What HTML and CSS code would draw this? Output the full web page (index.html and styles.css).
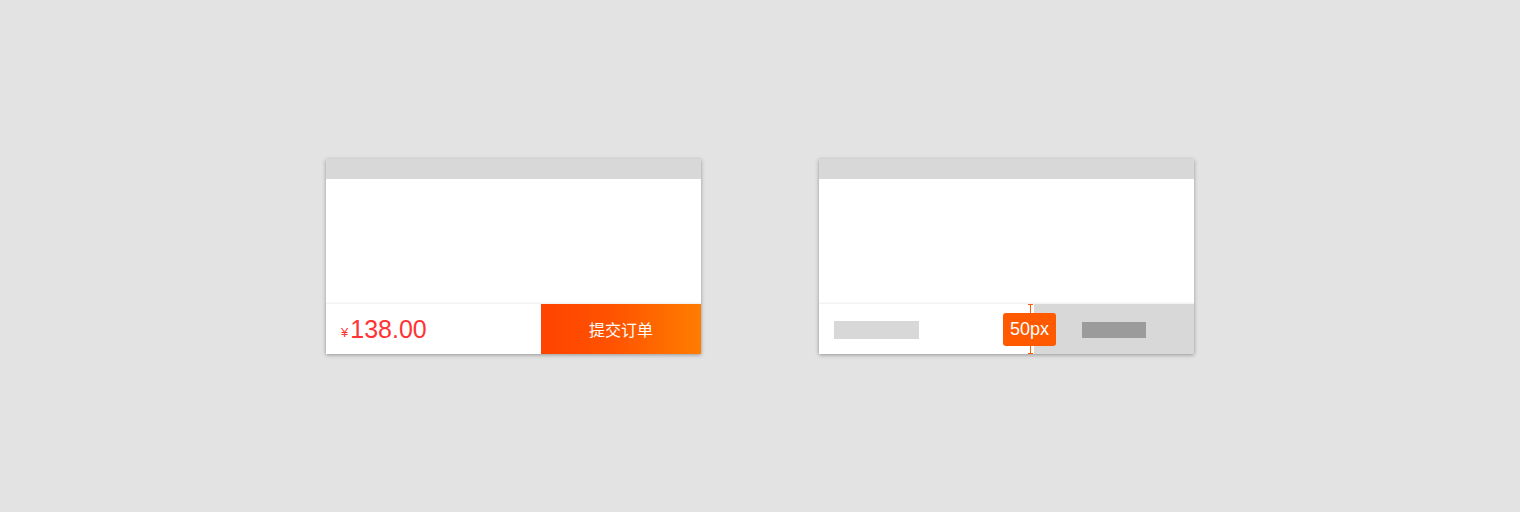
FILE: index.html
```html
<!DOCTYPE html>
<html lang="zh-CN">
<head>
<meta charset="utf-8">
<title>提交订单</title>
<link rel="stylesheet" href="styles.css">
</head>
<body>
<div class="stage">
  <div class="phone">
    <div class="status"></div>
    <div class="content"></div>
    <div class="footer">
      <div class="price"><span class="yen">¥</span><span class="amount">138.00</span></div>
      <div class="submit">提交订单</div>
    </div>
  </div>
  <div class="phone">
    <div class="status"></div>
    <div class="content"></div>
    <div class="footer">
      <div class="price"><span class="ph-light"></span></div>
      <div class="submit gray"><span class="ph-dark"></span></div>
      <div class="measure">
        <span class="mline"></span>
        <span class="badge">50px</span>
      </div>
    </div>
  </div>
</div>
</body>
</html>
```

FILE: styles.css
```css
html, body {
  margin: 0;
  padding: 0;
}
body {
  background: #e3e3e3;
  font-family: "Liberation Sans", "Noto Sans CJK SC", sans-serif;
}
.stage {
  width: 1520px;
  height: 512px;
  display: flex;
  align-items: center;
  justify-content: center;
  gap: 118px;
  padding-top: 1px;
  box-sizing: border-box;
}
.phone {
  width: 375px;
  height: 195px;
  background: #fff;
  display: flex;
  flex-direction: column;
  box-shadow: 0 1px 4px rgba(0, 0, 0, 0.35);
}
.status {
  height: 20px;
  background: #d8d8d8;
}
.content {
  flex: 1;
}
.footer {
  height: 50px;
  display: flex;
  position: relative;
  box-shadow: 0 -1px 2px rgba(0, 0, 0, 0.08);
}
.price {
  flex: 1;
  display: flex;
  align-items: center;
  padding-left: 15px;
  color: #ff3333;
}
.yen {
  font-size: 13px;
  margin-top: 7px;
  margin-right: 2px;
}
.amount {
  font-size: 25px;
  font-family: "Liberation Sans", sans-serif;
}
.submit {
  width: 160px;
  display: flex;
  align-items: center;
  justify-content: center;
  color: #fff;
  font-family: "Noto Sans CJK SC", sans-serif;
  font-size: 16px;
  background: linear-gradient(to right, #ff4300 0%, #ff5300 45%, #ff7d00 100%);
}
.submit.gray {
  background: #d8d8d8;
}
.ph-light {
  width: 85px;
  height: 18px;
  background: #d8d8d8;
  margin-top: 1px;
}
.ph-dark {
  width: 64px;
  height: 16px;
  background: #9b9b9b;
  margin-top: 2px;
}
.measure {
  position: absolute;
  left: 184px;
  top: 0;
  width: 53px;
  height: 50px;
}
.mline {
  position: absolute;
  left: 27px;
  top: 0;
  width: 1px;
  height: 50px;
  background: #ff5a00;
}
.mline::before,
.mline::after {
  content: "";
  position: absolute;
  left: -2px;
  width: 5px;
  height: 1px;
  background: #ff5a00;
}
.mline::before { top: 0; }
.mline::after { bottom: 0; }
.badge {
  position: absolute;
  left: 0;
  top: 9px;
  width: 53px;
  height: 33px;
  border-radius: 3px;
  background: #ff5a00;
  color: #fff;
  font-size: 18px;
  line-height: 33px;
  text-align: center;
}
```
